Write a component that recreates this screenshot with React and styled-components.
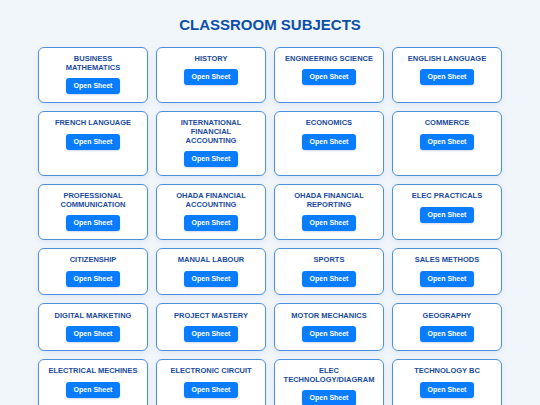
import React from 'react'
import styled, { createGlobalStyle } from 'styled-components'

const GlobalStyle = createGlobalStyle`
  html, body {
    margin: 0;
    padding: 0;
    background-color: #f1f6fb;
    font-family: "Liberation Sans", Arial, sans-serif;
  }
`

const Page = styled.div`
  padding-top: 16px;
  padding-bottom: 20px;
`

const Title = styled.h1`
  margin: 0 0 12.6px;
  text-align: center;
  font-size: 15px;
  line-height: 18px;
  font-weight: 700;
  color: #0d4fa8;
`

const Grid = styled.div`
  display: grid;
  grid-template-columns: repeat(4, 110px);
  justify-content: center;
  gap: 8px;
`

const Card = styled.div`
  box-sizing: border-box;
  display: flex;
  flex-direction: column;
  align-items: center;
  background-color: #fff;
  border: 1.5px solid #4d8fdb;
  border-radius: 6px;
  padding: 7.6px 8.15px 7.6px;
  box-shadow: 0 2px 6px rgba(30, 90, 170, 0.1);
`

const Subject = styled.div`
  text-align: center;
  font-size: 7.5px;
  line-height: 8.7px;
  font-weight: 700;
  color: #1a4b9b;
  margin-bottom: 5.6px;
`

const Button = styled.button`
  box-sizing: border-box;
  display: inline-flex;
  align-items: center;
  justify-content: center;
  height: 16px;
  font-family: inherit;
  background-color: #0a7cff;
  color: #fff;
  border: none;
  border-radius: 3px;
  padding: 0 8px;
  font-size: 7px;
  line-height: 8px;
  font-weight: 700;
  cursor: pointer;
  box-shadow: 0 1px 2px rgba(0, 60, 150, 0.2);
`

const subjects = [
  'BUSINESS MATHEMATICS',
  'HISTORY',
  'ENGINEERING SCIENCE',
  'ENGLISH LANGUAGE',
  'FRENCH LANGUAGE',
  'INTERNATIONAL FINANCIAL ACCOUNTING',
  'ECONOMICS',
  'COMMERCE',
  'PROFESSIONAL COMMUNICATION',
  'OHADA FINANCIAL ACCOUNTING',
  'OHADA FINANCIAL REPORTING',
  'ELEC PRACTICALS',
  'CITIZENSHIP',
  'MANUAL LABOUR',
  'SPORTS',
  'SALES METHODS',
  'DIGITAL MARKETING',
  'PROJECT MASTERY',
  'MOTOR MECHANICS',
  'GEOGRAPHY',
  'ELECTRICAL MECHINES',
  'ELECTRONIC CIRCUIT',
  'ELEC TECHNOLOGY/DIAGRAM',
  'TECHNOLOGY BC',
]

const App = () => {
  return (
    <>
      <GlobalStyle />
      <Page>
        <Title>CLASSROOM SUBJECTS</Title>
        <Grid>
          {subjects.map((s) => (
            <Card key={s}>
              <Subject>{s}</Subject>
              <Button>Open Sheet</Button>
            </Card>
          ))}
        </Grid>
      </Page>
    </>
  )
}

export default App
